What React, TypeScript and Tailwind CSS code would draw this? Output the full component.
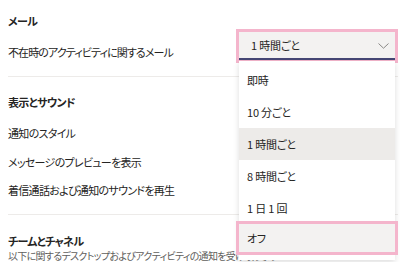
import React from 'react';

const options = ['即時', '10 分ごと', '1 時間ごと', '8 時間ごと', '1 日 1 回'];

export default function App() {
  return (
    <div
      className="relative w-[400px] h-[262px] overflow-hidden bg-white text-[11px] tracking-[-0.7px] text-[#252423] [font-feature-settings:'palt'] font-['Noto_Sans_CJK_JP','Noto_Sans',sans-serif]"
    >
      <div className="pt-[13px] pl-[8px] pr-[2px]">
        {/* メール */}
        <div className="leading-[16px] font-bold">メール</div>
        <div className="flex items-start justify-between">
          <div className="mt-[15px] leading-[16px] tracking-[-0.9px]">不在時のアクティビティに関するメール</div>
          <div className="relative w-[162px] border-[3px] border-[#f4b5cc] tracking-[-0.2px]">
            <div className="flex h-[28px] items-center justify-between bg-[#f3f2f1] border-b-[2px] border-[#464775] pl-[12px] pr-[6px]">
              <span className="leading-[16px] whitespace-pre">1 時間ごと</span>
              <svg width="11" height="6" viewBox="0 0 11 6" fill="none" className="mt-[2px]">
                <path d="M0.5 0.5 L5.5 5.2 L10.5 0.5" stroke="#8a8886" strokeWidth="1" />
              </svg>
            </div>

            {/* dropdown menu */}
            <div className="absolute left-0 top-full mt-[1px] w-[156px] bg-white pt-[3px] shadow-[0_2px_6px_rgba(0,0,0,0.14)] z-10">
              {options.map((o) => (
                <div
                  key={o}
                  className={
                    'flex h-[32px] items-center px-[8px] leading-[16px] whitespace-pre ' +
                    (o === '1 時間ごと' ? 'bg-[#edebe9]' : '')
                  }
                >
                  {o}
                </div>
              ))}
              <div className="flex h-[28px] items-center px-[8px] leading-[16px] bg-[#f3f2f1] outline-[3px] outline-solid outline-[#f4b5cc]">
                オフ
              </div>
              <div className="h-[8px]" />
            </div>
          </div>
        </div>

        <div className="mt-[13px] border-t border-[#edebe9]" />

        {/* 表示とサウンド */}
        <div className="mt-[17px] leading-[16px] font-bold">表示とサウンド</div>
        <div className="mt-[15px] leading-[16px]">通知のスタイル</div>
        <div className="mt-[13px] leading-[16px]">メッセージのプレビューを表示</div>
        <div className="mt-[12px] leading-[16px]">着信通話および通知のサウンドを再生</div>

        <div className="mt-[16px] border-t border-[#edebe9]" />

        {/* チームとチャネル */}
        <div className="mt-[18px] leading-[16px] font-bold">チームとチャネル</div>
        <div className="leading-[13px] text-[10px] text-[#605e5c] whitespace-nowrap">
          以下に関するデスクトップおよびアクティビティの通知を受け取ります:
        </div>
      </div>
    </div>
  );
}
